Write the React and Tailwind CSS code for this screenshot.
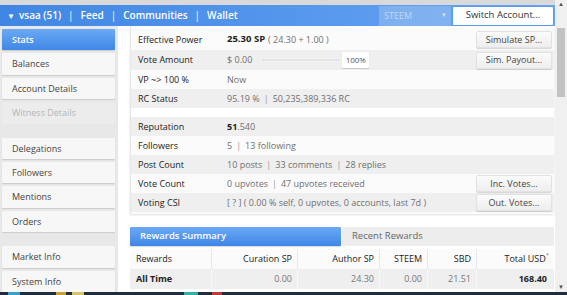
import React from "react";

const font = { fontFamily: '"Open Sans", "Noto Sans", sans-serif' };

function SideItem({ label, active, disabled }) {
  return (
    <div
      className={
        "h-[22px] flex items-center pl-[10px] rounded-[1px] shadow-[0_1px_1px_rgba(0,0,0,0.12)] " +
        (active
          ? "bg-gradient-to-b from-[#6aa9f4] to-[#3f87e6] text-white font-semibold"
          : disabled
          ? "bg-[#ececec] text-[#b5b5b5] shadow-none"
          : "bg-[#f7f7f7] text-[#444]")
      }
    >
      {label}
    </div>
  );
}

function Btn({ children }) {
  return (
    <div className="w-[76px] h-[17px] flex items-center justify-center bg-gradient-to-b from-[#fbfbfb] to-[#eeeeee] border border-[#e2e2e2] rounded-[2px] shadow-[0_1px_1px_rgba(0,0,0,0.15)] text-[#444]">
      {children}
    </div>
  );
}

function Row({ label, gray, h = "h-[19px]", children, btn }) {
  return (
    <div className={"flex items-center " + h + " " + (gray ? "bg-[#efefef]" : "bg-[#fbfbfb]")}>
      <div className="w-[96px] pl-[7px] text-[#222] font-medium">{label}</div>
      <div className="flex-1 flex items-center text-[#707070]">{children}</div>
      {btn && <div className="pr-[2px]"><Btn>{btn}</Btn></div>}
    </div>
  );
}

const Sep = () => <span className="mx-[4px] text-[#999]">|</span>;

function Sep2() {
  return <span className="mx-[7px] font-normal">|</span>;
}

export default function App() {
  return (
    <div className="w-[567px] h-[295px] flex flex-col overflow-hidden bg-white text-[9px]" style={font}>
      <div className="flex flex-1 min-h-0">
        <div className="w-[555px] flex flex-col">
          <div className="h-[5px] bg-[#d9d9d9]" />
          <div className="h-[21px] flex items-center bg-gradient-to-r from-[#3f86e4] to-[#69a6f4] text-white">
            <div className="flex items-center pl-[7px] text-[10px] font-semibold">
              <span className="text-[8px] mr-[4px]">▼</span>
              <span>vsaa (51)</span>
              <Sep2 />
              <span>Feed</span>
              <Sep2 />
              <span>Communities</span>
              <Sep2 />
              <span>Wallet</span>
            </div>
            <div className="flex-1" />
            <div className="w-[72px] h-[20px] flex items-center justify-between px-[5px] bg-[#8db9f0]/70 text-[#c3d7f3] text-[9px]">
              <span>STEEM</span>
              <span className="text-[7px] text-[#d8e6f8]">▾</span>
            </div>
            <div className="ml-[1px] mr-[1px] w-[102px] h-[20px] flex items-center justify-center bg-white border border-[#5b9bea] rounded-[2px] text-[#333] text-[9.5px]">
              Switch Account...
            </div>
          </div>
          <div className="flex flex-1 min-h-0">
            <div className="w-[118px] bg-[#e8e8e8] pl-[2px] pr-[3px] pt-[3px] flex flex-col gap-[3px]">
              <SideItem label="Stats" active />
              <SideItem label="Balances" />
              <SideItem label="Account Details" />
              <SideItem label="Witness Details" disabled />
              <div className="h-[8px]" />
              <SideItem label="Delegations" />
              <SideItem label="Followers" />
              <SideItem label="Mentions" />
              <SideItem label="Orders" />
              <div className="h-[8px]" />
              <SideItem label="Market Info" />
              <SideItem label="System Info" />
            </div>
            <div className="flex-1 pl-[12px] pr-[1px]">
              <div className="pt-[3px] border-l border-[#e6e6e6] shadow-[0_1px_2px_rgba(0,0,0,0.12)] bg-[#fbfbfb]">
                <Row label="Effective Power" h="h-[21px]" btn="Simulate SP...">
                  <span className="font-bold text-[#222] text-[9.5px]">25.30 SP</span>
                  <span className="ml-[3px]">( 24.30 + 1.00 )</span>
                </Row>
                <Row label="Vote Amount" gray h="h-[20px]" btn="Sim. Payout...">
                  <span>$ 0.00</span>
                  <div className="ml-[9px] w-[80px] h-[4px] bg-[#e3e3e3] border border-[#f3f3f3]" />
                  <div className="ml-[1px] w-[27px] h-[16px] flex items-center justify-center bg-white shadow-[0_1px_1px_rgba(0,0,0,0.18)] rounded-[1px] text-[8px] text-[#555]">100%</div>
                </Row>
                <Row label="VP ~> 100 %">Now</Row>
                <Row label="RC Status" gray>
                  95.19 %<Sep />50,235,389,336 RC
                </Row>
                <div className="h-[9px] bg-white" />
                <Row label="Reputation" gray>
                  <span className="font-bold text-[#222]">51</span>.540
                </Row>
                <Row label="Followers">
                  5<Sep />13 following
                </Row>
                <Row label="Post Count" gray>
                  10 posts<Sep />33 comments<Sep />28 replies
                </Row>
                <Row label="Vote Count" btn="Inc. Votes...">
                  0 upvotes<Sep />47 upvotes received
                </Row>
                <Row label="Voting CSI" gray btn="Out. Votes...">
                  [ ? ] ( 0.00 % self, 0 upvotes, 0 accounts, last 7d )
                </Row>
                <div className="h-[2px]" />
              </div>
              <div className="mt-[13px] flex gap-[1px]">
                <div className="w-[211px] h-[19px] flex items-center pl-[10px] bg-gradient-to-b from-[#6aa9f4] to-[#3f87e6] text-white font-semibold text-[9.5px] rounded-[1px] shadow-[0_1px_1px_rgba(0,0,0,0.15)]">
                  Rewards Summary
                </div>
                <div className="flex-1 h-[19px] flex items-center pl-[10px] bg-[#ededed] text-[#666] text-[9.5px] rounded-[1px]">
                  Recent Rewards
                </div>
              </div>
              <div className="mt-[3px] bg-[#fbfbfb]">
                <div className="flex h-[20px] items-center text-[#222] font-medium">
                  <div className="w-[81px] pl-[6px]">Rewards</div>
                  <div className="w-[86px] h-full flex items-center justify-end pr-[5px] border-l border-[#e8e8e8]">Curation SP</div>
                  <div className="w-[82px] h-full flex items-center justify-end pr-[5px] border-l border-[#e8e8e8]">Author SP</div>
                  <div className="w-[48px] h-full flex items-center justify-end pr-[5px] border-l border-[#e8e8e8]">STEEM</div>
                  <div className="w-[49px] h-full flex items-center justify-end pr-[5px] border-l border-[#e8e8e8]">SBD</div>
                  <div className="flex-1 h-full flex items-center justify-end pr-[5px] border-l border-[#e8e8e8]">
                    Total USD<sup className="text-[6px] text-[#888] -top-[4px]">*</sup>
                  </div>
                </div>
                <div className="flex h-[20px] items-center bg-[#efefef] text-[#777]">
                  <div className="w-[81px] pl-[6px] font-bold text-[#222]">All Time</div>
                  <div className="w-[86px] h-full flex items-center justify-end pr-[5px] border-l border-[#f8f8f8]">0.00</div>
                  <div className="w-[82px] h-full flex items-center justify-end pr-[5px] border-l border-[#f8f8f8]">24.30</div>
                  <div className="w-[48px] h-full flex items-center justify-end pr-[5px] border-l border-[#f8f8f8]">0.00</div>
                  <div className="w-[49px] h-full flex items-center justify-end pr-[5px] border-l border-[#f8f8f8]">21.51</div>
                  <div className="flex-1 h-full flex items-center justify-end pr-[7px] border-l border-[#f8f8f8] font-bold text-[#222]">168.40</div>
                </div>
              </div>
            </div>
          </div>
        </div>
        <div className="w-[12px] bg-[#f0f0f0] flex flex-col items-center">
          <div className="h-[9px] flex items-center text-[6px] text-[#505050]">▲</div>
          <div className="mt-[19px] w-[8px] h-[69px] bg-[#c2c2c2]" />
          <div className="flex-1" />
          <div className="h-[9px] flex items-center text-[6px] text-[#505050]">▼</div>
        </div>
      </div>
      <div className="h-[3px] flex bg-[#1f2d3d]">
        <div className="w-[12px] ml-[8px] bg-[#3aa0c8]" />
        <div className="w-[10px] ml-[36px] bg-[#c7a13c]" />
        <div className="w-[12px] ml-[6px] bg-[#d9c36a]" />
        <div className="w-[14px] ml-[100px] bg-[#35b0a0]" />
        <div className="w-[10px] ml-[14px] bg-[#c03a3a]" />
      </div>
    </div>
  );
}
